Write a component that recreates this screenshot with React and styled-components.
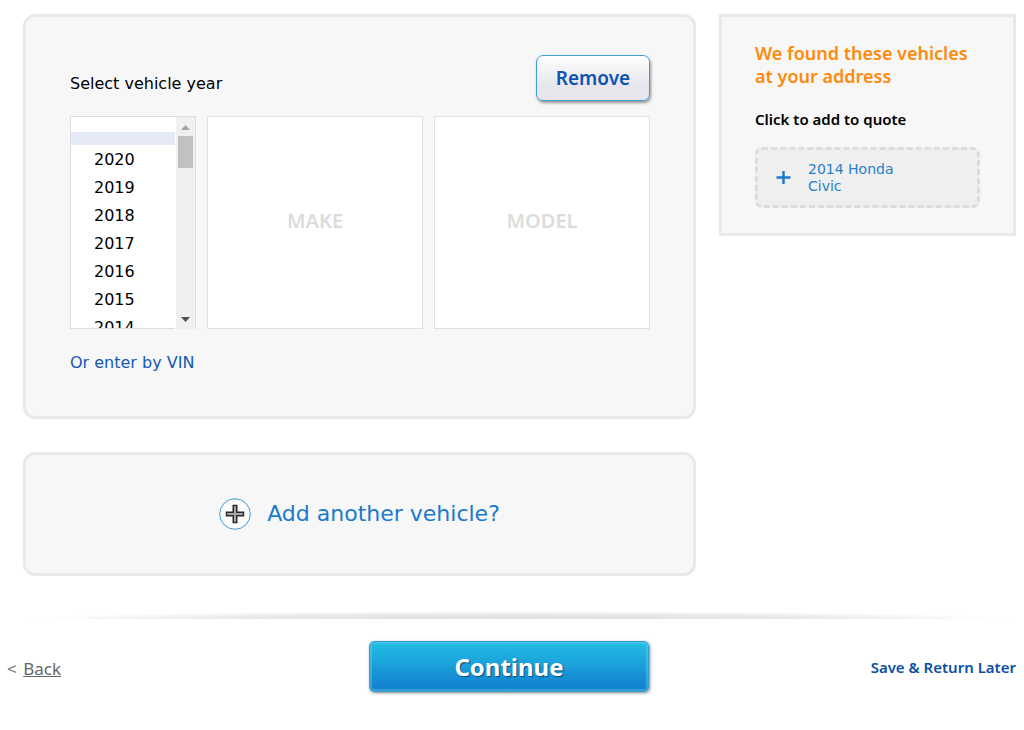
import React from "react";
import styled, { createGlobalStyle } from "styled-components";

const body = `"DejaVu Sans", sans-serif`;
const heading = `"Noto Sans", "Open Sans", sans-serif`;

const GlobalStyle = createGlobalStyle`
  * { box-sizing: border-box; }
  body { margin: 0; background: #fff; color: #000; font: 16px/20px ${body}; }
  a { text-decoration: none; }
`;

const Page = styled.div`
  padding: 14px 8px 38px;
`;

const Columns = styled.div`
  display: flex;
  align-items: flex-start;
  gap: 23px;
  padding-left: 15px;
`;

const Vehicles = styled.main`
  flex: 1;
  min-width: 0;
  display: flex;
  flex-direction: column;
  gap: 33px;
`;

const Card = styled.section`
  background: #f7f7f7;
  border: 3px solid #e9e9e9;
  border-radius: 12px;
`;

const VehicleCard = styled(Card)`
  padding: 38px 43px 43px 44px;
`;

const CardHeader = styled.div`
  display: flex;
  align-items: center;
  justify-content: space-between;
  padding-bottom: 15px;
`;

const FieldLabel = styled.label`
  padding-top: 12px;
`;

const RemoveButton = styled.button`
  width: 114px;
  height: 46px;
  padding: 0;
  border: 1px solid #3f9fd0;
  border-radius: 7px;
  background: linear-gradient(#fff, #e7e6ec 65%, #e7e6ec);
  box-shadow: 1px 2px 3px rgba(0, 0, 0, 0.4);
  color: #0c54b0;
  font: 600 19px/24px ${heading};
`;

const Fields = styled.div`
  display: grid;
  grid-template-columns: 126px 1fr 1fr;
  column-gap: 11px;
  height: 213px;
`;

const YearField = styled.div`
  position: relative;
  min-height: 0;
`;

const YearList = styled.select`
  display: block;
  width: 100%;
  height: 100%;
  padding: 15px 0 0;
  border: 1px solid #ddd;
  border-radius: 0;
  background: #fff;
  color: #000;
  font: 16px/20px ${body};
  outline: none;
  scrollbar-width: none;

  option {
    min-height: 13px;
    padding: 0;
  }
  option:not(:empty) {
    padding: 5px 23px 4px;
  }
  option:checked {
    background: #e5eaf6 linear-gradient(#e5eaf6, #e5eaf6);
  }
`;

const Scrollbar = styled.div`
  position: absolute;
  top: 1px;
  right: 1px;
  bottom: 0;
  display: flex;
  flex-direction: column;
  align-items: center;
  width: 20px;
  padding: 8px 0 7px;
  border-left: 1px solid #fff;
  background: #f0f0f0;
  pointer-events: none;
`;

const Thumb = styled.div`
  width: 15px;
  height: 32px;
  margin: 6px 0 auto;
  background: #c1c1c1;
`;

const Placeholder = styled.div`
  display: flex;
  align-items: center;
  justify-content: center;
  padding-bottom: 4px;
  border: 1px solid #e1e1e1;
  background: #fff;
  color: #dcdcdc;
  font: 600 20px/24px ${heading};
`;

const VinLink = styled.a`
  display: inline-block;
  margin-top: 24px;
  color: #1459b3;
`;

const AddCard = styled(Card)`
  display: flex;
  align-items: center;
  justify-content: center;
  height: 124px;
`;

const AddButton = styled.button`
  display: flex;
  align-items: center;
  gap: 16px;
  padding: 0;
  border: 0;
  background: none;
  color: #1a7acb;
  font: 22px/32px ${body};
`;

const Found = styled.aside`
  flex: 0 0 297px;
  padding: 25px 33px;
  border: 3px solid #e9e9e9;
  background: #f7f7f7;
`;

const FoundTitle = styled.h2`
  margin: 0;
  color: #ff8a0c;
  font: 600 18px/23px ${heading};
`;

const FoundHint = styled.p`
  margin: 21px 0 18px;
  font: 600 15px/20px ${heading};
`;

const FoundVehicle = styled.button`
  display: flex;
  align-items: center;
  gap: 17px;
  width: 225px;
  height: 61px;
  padding: 0 18px;
  border: 3px dashed #dcdcdc;
  border-radius: 7px;
  background: #efefef;
  color: #2a80c8;
  font: 14px/17px ${body};
  text-align: left;

  span {
    max-width: 100px;
  }
`;

const Divider = styled.hr`
  height: 8px;
  margin: 35px 0 22px 15px;
  border: 0;
  background: radial-gradient(ellipse 50% 100% at 50% 100%, #dedfe1, #e6e7e8 55%, #fff);
`;

const Footer = styled.footer`
  display: grid;
  grid-template-columns: 1fr 280px 1fr;
  align-items: center;
  margin-left: -6px;
`;

const Back = styled.div`
  padding: 4px 0 0 5px;
  color: #777;
  font: 17px/24px ${heading};

  a {
    margin-left: 2px;
    color: #666;
    text-decoration: underline;
  }
`;

const ContinueButton = styled.button`
  height: 51px;
  padding: 0;
  border: 1px solid #2fa3cf;
  border-radius: 5px;
  background: linear-gradient(#22bfe6, #127ccd);
  box-shadow: inset 0 0 1px 2px rgba(110, 200, 235, 0.45), 1px 1px 3px rgba(0, 0, 0, 0.5);
  color: #fff;
  font: 700 24px/32px ${heading};
  text-shadow: 1px 1px 1px rgba(0, 40, 80, 0.7);
`;

const SaveLink = styled.a`
  justify-self: end;
  color: #0c4fa8;
  font: 600 15px/24px ${heading};
`;

const years = Array.from({ length: 40 }, (_, i) => 2020 - i);

function CirclePlus() {
  return (
    <svg width="32" height="32" viewBox="0 0 32 32" aria-hidden="true">
      <circle cx="16" cy="16" r="15.3" fill="#fcfcfc" stroke="#3f9ad8" />
      <path
        d="M14.25 7.5h3.5v6.75h6.75v3.5h-6.75v6.75h-3.5v-6.75h-6.75v-3.5h6.75z"
        fill="#a6a6a6"
        stroke="#2b2b2b"
        strokeWidth="1.5"
      />
    </svg>
  );
}

function Plus() {
  return (
    <svg width="15" height="15" viewBox="0 0 15 15" aria-hidden="true">
      <path d="M7.5 1v13M.5 7.5h14" stroke="#1a7acb" strokeWidth="2.4" />
    </svg>
  );
}

function Arrow({ down }) {
  return (
    <svg width="9" height="5" viewBox="0 0 9 5">
      <path d={down ? "M0 0h9L4.5 5z" : "M0 5h9L4.5 0z"} fill={down ? "#505050" : "#a3a3a3"} />
    </svg>
  );
}

export default function App() {
  return (
    <Page>
      <GlobalStyle />
      <Columns>
        <Vehicles>
          <VehicleCard>
            <CardHeader>
              <FieldLabel htmlFor="year">Select vehicle year</FieldLabel>
              <RemoveButton type="button">Remove</RemoveButton>
            </CardHeader>
            <Fields>
              <YearField>
                <YearList id="year" size={7} defaultValue="">
                  <option value=""></option>
                  {years.map((year) => (
                    <option key={year} value={year}>{year}</option>
                  ))}
                </YearList>
                <Scrollbar aria-hidden="true">
                  <Arrow />
                  <Thumb />
                  <Arrow down />
                </Scrollbar>
              </YearField>
              <Placeholder>MAKE</Placeholder>
              <Placeholder>MODEL</Placeholder>
            </Fields>
            <VinLink href="#vin">Or enter by VIN</VinLink>
          </VehicleCard>
          <AddCard>
            <AddButton type="button">
              <CirclePlus />
              Add another vehicle?
            </AddButton>
          </AddCard>
        </Vehicles>
        <Found>
          <FoundTitle>We found these vehicles at your address</FoundTitle>
          <FoundHint>Click to add to quote</FoundHint>
          <FoundVehicle type="button">
            <Plus />
            <span>2014 Honda Civic</span>
          </FoundVehicle>
        </Found>
      </Columns>
      <Divider />
      <Footer>
        <Back>
          &lt; <a href="#back">Back</a>
        </Back>
        <ContinueButton type="button">Continue</ContinueButton>
        <SaveLink href="#save">Save &amp; Return Later</SaveLink>
      </Footer>
    </Page>
  );
}
